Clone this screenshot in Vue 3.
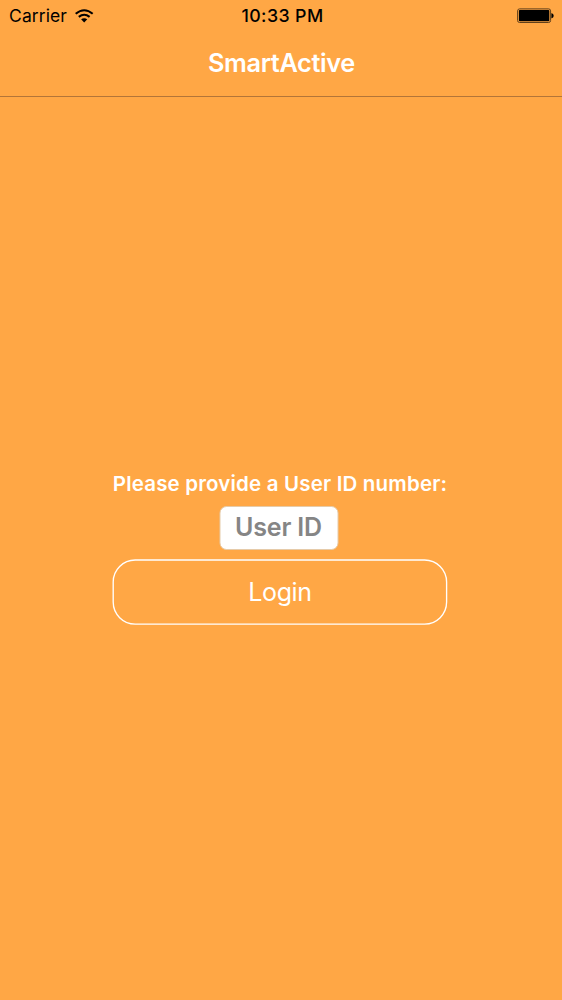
<script setup>
import { ref } from 'vue'

const userId = ref('')
</script>

<template>
  <div class="screen">
    <div class="status">
      <div class="carrier">
        <span class="carrier-name">Carrier</span>
        <svg class="wifi" width="20" height="14" viewBox="0 0 20 14" fill="none">
          <path d="M1.7 4.8Q10.2-2.3 18.7 4.8" stroke="#000" stroke-width="2.1" />
          <path d="M4.8 7.9Q10.2 3.6 15.6 7.9" stroke="#000" stroke-width="2.1" />
          <path d="M7.1 10.3Q10.2 8 13.3 10.3L10.2 13.4Z" fill="#000" />
        </svg>
      </div>
      <span class="time">10:33 PM</span>
      <svg class="battery" width="38" height="16" viewBox="0 0 38 16">
        <rect x="1.6" y="0.9" width="33" height="13.6" rx="2" fill="none" stroke="#5f3f1a" stroke-width="1" />
        <rect x="2.9" y="2.1" width="30.4" height="11.2" rx="0.8" fill="#000" />
        <path d="M35.4 5.2h.5q1.8.8 1.8 2.5t-1.8 2.5h-.5Z" fill="#000" />
      </svg>
    </div>
    <header class="nav"><h1>SmartActive</h1></header>
    <main class="form">
      <label for="user-id">Please provide a User ID number:</label>
      <input id="user-id" v-model="userId" placeholder="User ID" />
      <button type="button">
        <svg class="outline" width="336" height="66" viewBox="0 0 336 66" fill="none">
          <rect x="1.2" y="1" width="333.4" height="64.1" rx="22" stroke="#fff" stroke-width="1.35" />
        </svg>
        <span>Login</span>
      </button>
    </main>
  </div>
</template>

<style>
body {
  background: #ffa745;
}
</style>

<style scoped>
.screen {
  width: 562px;
  height: 1000px;
  display: flex;
  flex-direction: column;
  overflow: hidden;
  background: #ffa745;
  font-family: Inter, "Liberation Sans", sans-serif;
}
.status {
  height: 30px;
  display: grid;
  grid-template-columns: 1fr auto 1fr;
  align-items: center;
  padding: 1px 8px 0 9px;
  box-sizing: border-box;
  color: #000;
}
.carrier {
  display: flex;
  align-items: center;
  gap: 7px;
}
.carrier-name {
  font-size: 17.5px;
  letter-spacing: 0.1px;
}
.time {
  margin-left: 2px;
  font-size: 17.8px;
  font-weight: 550;
  letter-spacing: 0.4px;
}
.battery {
  justify-self: end;
}
.nav {
  height: 67px;
  box-sizing: border-box;
  border-bottom: 1px solid #b37538;
  display: flex;
  align-items: center;
  justify-content: center;
  padding: 0 0 2px 1px;
}
h1 {
  margin: 0;
  font-size: 25.3px;
  font-weight: 580;
  letter-spacing: -0.35px;
  color: #fff;
}
.form {
  width: 335px;
  margin: 370px 0 0 112px;
  display: flex;
  flex-direction: column;
  align-items: center;
}
label {
  height: 34px;
  line-height: 34px;
  padding-left: 1px;
  white-space: nowrap;
  font-size: 20.5px;
  font-weight: 570;
  letter-spacing: 0.18px;
  color: #fff;
}
input {
  width: 119px;
  height: 44px;
  margin: 5px 1px 9px 0;
  padding: 0 0 3px;
  box-sizing: border-box;
  border: 1px solid #e6cba9;
  border-radius: 7px;
  background: #fff;
  font-family: inherit;
  font-size: 25px;
  font-weight: 570;
  letter-spacing: -0.15px;
  text-align: center;
  transform: translateX(-0.5px);
}
input::placeholder {
  color: #858585;
  opacity: 1;
}
button {
  position: relative;
  width: 335px;
  height: 66px;
  padding: 0 0 0 1px;
  border: 0;
  border-radius: 23px;
  background: transparent;
  font-family: inherit;
  font-size: 25px;
  font-weight: 380;
  letter-spacing: -0.4px;
  color: #fff;
}
.outline {
  position: absolute;
  left: 0;
  top: 0;
}
</style>
